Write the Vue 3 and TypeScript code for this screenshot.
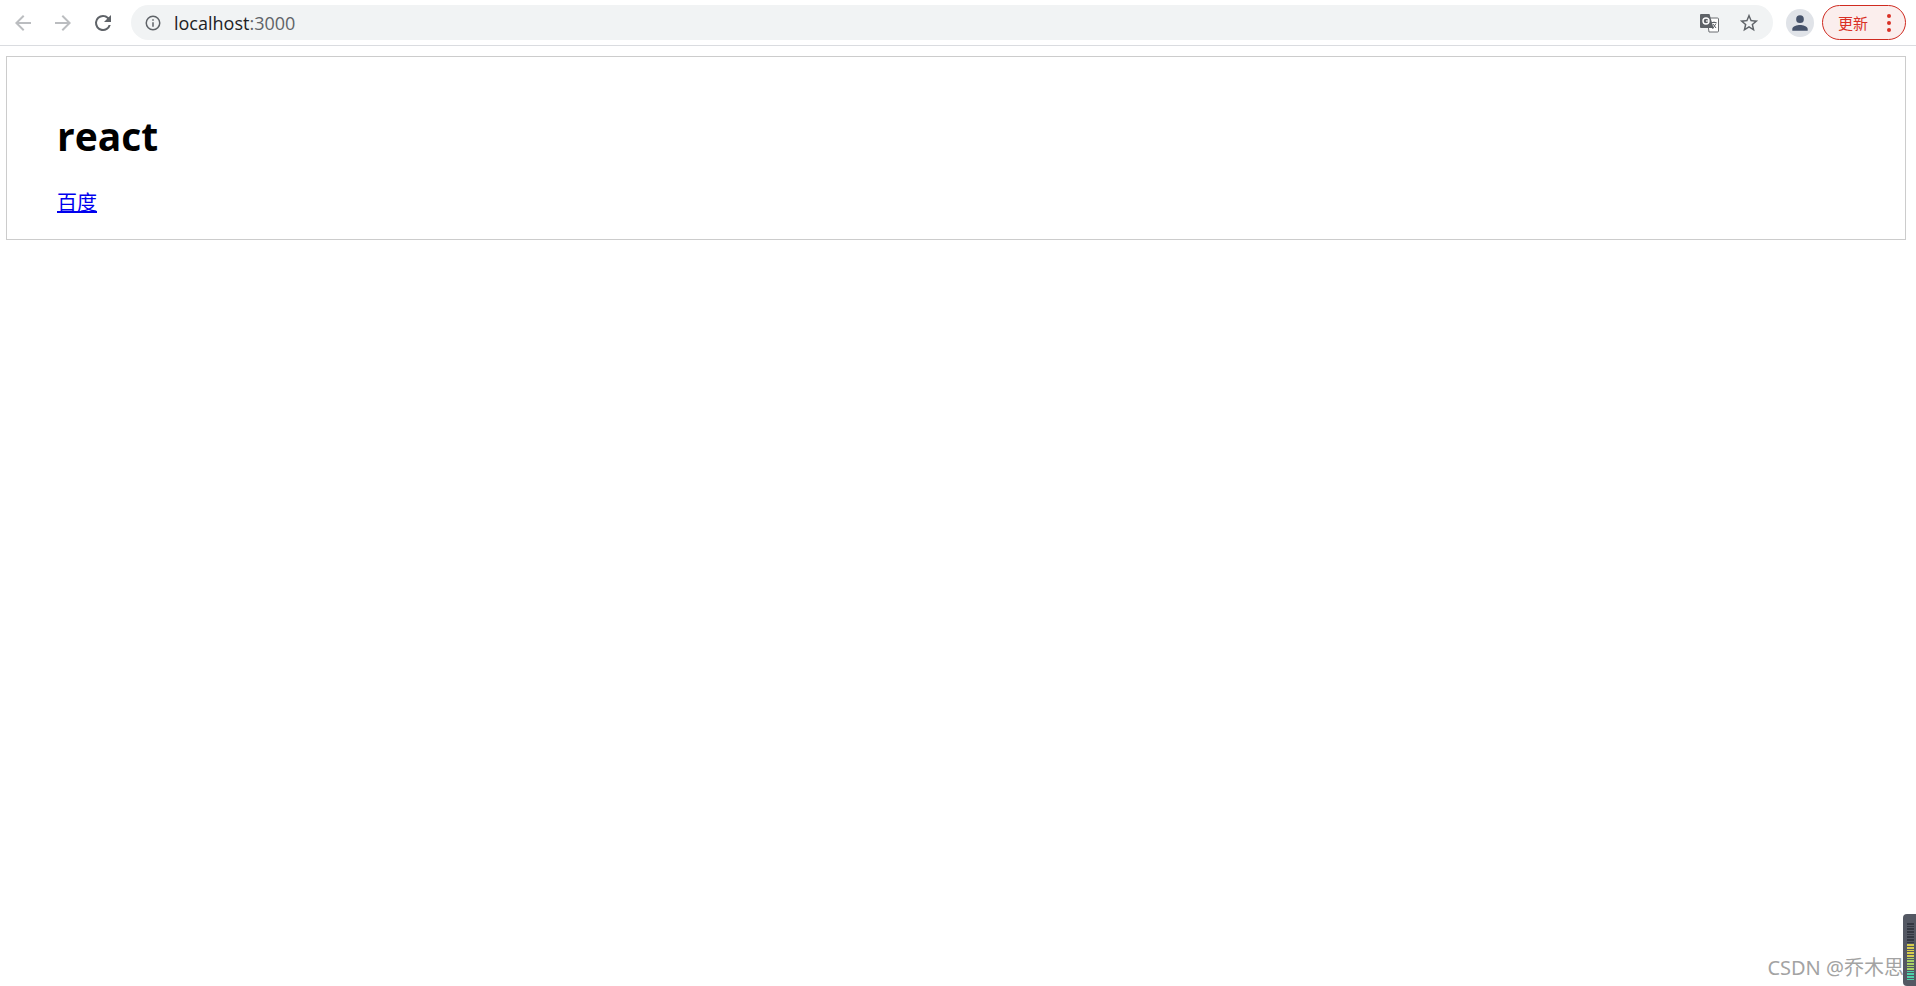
<template>
  <div class="page">
    <header class="toolbar">
      <div class="nav">
        <button class="nav-btn" aria-label="back">
          <svg viewBox="0 0 24 24" class="ico muted"><path d="M20 11H7.83l5.59-5.59L12 4l-8 8 8 8 1.41-1.41L7.83 13H20z" /></svg>
        </button>
        <button class="nav-btn" aria-label="forward">
          <svg viewBox="0 0 24 24" class="ico muted"><path d="M12 4l-1.41 1.41L16.17 11H4v2h12.17l-5.58 5.59L12 20l8-8z" /></svg>
        </button>
        <button class="nav-btn" aria-label="reload">
          <svg viewBox="0 0 24 24" class="ico dark"><path d="M17.65 6.35A7.96 7.96 0 0 0 12 4a8 8 0 1 0 7.73 10h-2.08A6 6 0 1 1 12 6c1.66 0 3.14.69 4.22 1.78L13 11h7V4z" /></svg>
        </button>
      </div>
      <div class="omnibox">
        <svg viewBox="0 0 24 24" class="info"><path d="M11 7h2v2h-2zm0 4h2v6h-2zm1-9a10 10 0 1 0 0 20 10 10 0 0 0 0-20zm0 18a8 8 0 1 1 0-16 8 8 0 0 1 0 16z" /></svg>
        <span class="url"><span class="host">localhost</span><span class="port">:3000</span></span>
        <span class="spacer"></span>
        <svg viewBox="0 0 20 20" class="translate">
          <path d="M8 5h10.5a1 1 0 0 1 1 1v12a1 1 0 0 1-1 1H10z" fill="#fff" stroke="#6a6d70" stroke-width="1" />
          <path d="M2 1h8.500l4 14H2a1 1 0 0 1-1-1V2a1 1 0 0 1 1-1z" fill="#5f6368" />
          <circle cx="7" cy="8" r="3" fill="none" stroke="#fff" stroke-width="1.4" />
          <path d="M7 8h3" stroke="#fff" stroke-width="1.2" />
          <path d="M12.500 9.500h5M15 8.500v1M13.500 16l3.500-5.500M14 11l3 4" fill="none" stroke="#5f6368" stroke-width="1" />
        </svg>
        <svg viewBox="0 0 24 24" class="star"><path d="M22 9.240l-7.190-.62L12 2 9.190 8.630 2 9.240l5.460 4.730L5.820 21 12 17.270 18.180 21l-1.630-7.030L22 9.240zM12 15.400l-3.760 2.270 1-4.280-3.320-2.880 4.380-.38L12 6.100l1.710 4.040 4.380.38-3.320 2.880 1 4.280L12 15.400z" /></svg>
      </div>
      <div class="avatar">
        <svg viewBox="0 0 24 24"><path d="M12 12a4.200 4.200 0 1 0 0-8.400 4.200 4.200 0 0 0 0 8.400zm0 2.100c-3 0-8.400 1.500-8.400 4.400V20.400h16.800V18.500c0-2.900-5.400-4.400-8.400-4.400z" /></svg>
      </div>
      <button class="update">
        <span>更新</span>
        <span class="dots"><i></i><i></i><i></i></span>
      </button>
    </header>

    <main class="content">
      <section class="app-box">
        <h1>react</h1>
        <a href="#">百度</a>
      </section>
    </main>

    <div class="watermark">CSDN @乔木思</div>
    <div class="meter">
      <i v-for="(color, index) in meterBars" :key="index" :style="{ background: color }"></i>
    </div>
  </div>
</template>

<script setup lang="ts">
const meterBars: string[] = [
  ...Array(8).fill("#343842"),
  ...Array(5).fill("#d6cc4e"),
  ...Array(5).fill("#a6d066"),
  ...Array(4).fill("#4fd0a8"),
];
</script>

<style>
html,
body {
  margin: 0;
  background: #fff;
}
</style>

<style scoped>
.page {
  position: relative;
  height: 986px;
  overflow: hidden;
  background: #fff;
  font-family: "Open Sans", "Noto Sans CJK SC", sans-serif;
}

.toolbar {
  display: flex;
  align-items: center;
  height: 45px;
  border-bottom: 1px solid #dadce0;
  box-sizing: content-box;
}

.nav {
  display: flex;
  align-items: center;
  gap: 16px;
  padding-left: 11px;
}

.nav-btn {
  display: flex;
  padding: 0;
  border: 0;
  background: none;
}

.ico {
  width: 24px;
  height: 24px;
}

.muted {
  fill: #bbbdc0;
}

.dark {
  fill: #5f6368;
}

.omnibox {
  display: flex;
  align-items: center;
  width: 1642px;
  height: 35px;
  margin-left: 16px;
  padding: 0 13px 0 13px;
  box-sizing: border-box;
  border-radius: 18px;
  background: #f1f3f4;
}

.info {
  width: 18px;
  height: 18px;
  fill: #5f6368;
}

.url {
  margin-left: 12px;
  font-size: 18px;
}

.host {
  color: #202124;
}

.port {
  color: #5f6368;
}

.spacer {
  flex: 1;
}

.translate {
  width: 20px;
  height: 20px;
}

.star {
  width: 22px;
  height: 22px;
  margin-left: 19px;
  fill: #5f6368;
}

.avatar {
  display: flex;
  align-items: center;
  justify-content: center;
  width: 28px;
  height: 28px;
  margin-left: 13px;
  border-radius: 50%;
  background: #e0e3e8;
}

.avatar svg {
  width: 22px;
  height: 22px;
  fill: #46536b;
}

.update {
  display: flex;
  align-items: center;
  width: 84px;
  height: 35px;
  margin-left: 8px;
  padding: 0 0 0 15px;
  box-sizing: border-box;
  border: 1px solid #cf2a20;
  border-radius: 18px;
  background: #fbeeed;
  color: #d93025;
  font-family: "Noto Sans CJK SC", sans-serif;
  font-size: 15px;
}

.dots {
  display: flex;
  flex-direction: column;
  gap: 3px;
  margin-left: 19px;
}

.dots i {
  width: 4px;
  height: 4px;
  border-radius: 50%;
  background: #d93025;
}

.content {
  padding: 10px 10px 0 6px;
}

.app-box {
  height: 184px;
  padding: 0 50px;
  box-sizing: border-box;
  border: 1px solid #ccc;
}

h1 {
  margin: 0;
  padding-top: 52px;
  color: #000;
  font-size: 39px;
  font-weight: 700;
  line-height: 54px;
}

a {
  display: inline-block;
  margin-top: 27px;
  color: #00e;
  font-size: 20px;
  line-height: 26px;
}

.watermark {
  position: absolute;
  right: 12px;
  bottom: 4px;
  color: #a3a3a3;
  font-family: "Noto Sans", "Noto Sans CJK SC", sans-serif;
  font-size: 20px;
  line-height: 28px;
  white-space: nowrap;
}

.meter {
  position: absolute;
  right: 0;
  bottom: 0;
  display: flex;
  flex-direction: column;
  gap: 1px;
  width: 13px;
  height: 72px;
  padding: 9px 2px 0 4px;
  box-sizing: border-box;
  border-radius: 4px 0 0 4px;
  background: #545863;
}

.meter i {
  flex: none;
  height: 1.67px;
}
</style>
